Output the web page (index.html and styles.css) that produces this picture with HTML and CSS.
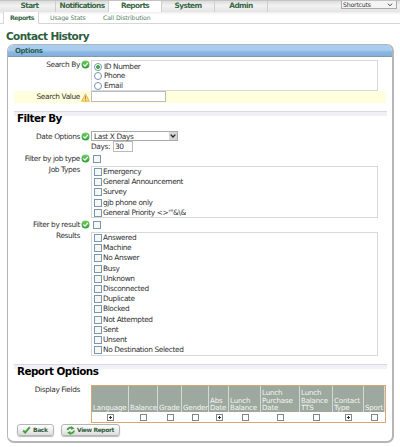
FILE: index.html
```html
<!DOCTYPE html>
<html lang="en">
<head>
<meta charset="utf-8">
<title>Contact History</title>
<link rel="stylesheet" href="styles.css">
</head>
<body>
<svg class="defs" width="0" height="0">
  <defs>
    <linearGradient id="g" x1="0" y1="0" x2="0" y2="1"><stop offset="0" stop-color="#78cf62"/><stop offset="1" stop-color="#2f9e38"/></linearGradient>
    <symbol id="ok" viewBox="0 0 9 9"><circle cx="4.5" cy="4.5" r="4" fill="url(#g)"/><path d="M2.4 4.5 4 6.1 6.8 3" fill="none" stroke="#fff" stroke-width="1.2"/></symbol>
    <symbol id="warn" viewBox="0 0 9 9"><path d="M4.5 .8 8.5 8.3H.5Z" fill="#ffd978" stroke="#e9ad45" stroke-width=".8" stroke-linejoin="round"/><path d="M4.5 3v2.9M4.5 6.6v1" stroke="#a98148" stroke-width=".9"/></symbol>
  </defs>
</svg>
<nav class="tabs">
  <a>Start</a><a>Notifications</a><a class="active">Reports</a><a>System</a><a>Admin</a>
  <div class="shortcuts"><span>Shortcuts</span><svg width="6" height="4" viewBox="0 0 6 4"><path d="M1 .7 3 2.8 5 .7" fill="none" stroke="#444" stroke-width="1"/></svg></div>
</nav>
<nav class="subtabs"><a class="active">Reports</a><a class="usage">Usage Stats</a><a class="call">Call Distribution</a></nav>
<h1>Contact History</h1>
<main class="panel">
  <header>Options</header>
  <div class="content">
    <div class="row search-by">
      <label>Search By</label><svg class="ico"><use href="#ok"/></svg>
      <div class="box radios">
        <div><i class="radio on"></i>ID Number</div><div><i class="radio"></i>Phone</div><div><i class="radio"></i>Email</div>
      </div>
    </div>
    <div class="row search-value"><label>Search Value</label><svg class="ico"><use href="#warn"/></svg><div class="input"></div></div>
    <h2 class="filter">Filter By</h2>
    <div class="row date">
      <label>Date Options</label><svg class="ico"><use href="#ok"/></svg>
      <div>
        <div class="select"><span>Last X Days</span><b><svg width="6" height="4" viewBox="0 0 6 4"><path d="M.7 .6 3 3 5.3 .6" fill="none" stroke="#222" stroke-width="1.3"/></svg></b></div>
        <div class="days">Days:<div class="input">30</div></div>
      </div>
    </div>
    <div class="row single"><label>Filter by job type</label><svg class="ico"><use href="#ok"/></svg><i class="check"></i></div>
    <div class="row jobs">
      <label>Job Types</label><span class="ico"></span>
      <div class="box checks">
        <div><i class="check"></i>Emergency</div><div><i class="check"></i>General Announcement</div><div><i class="check"></i>Survey</div><div><i class="check"></i>gjb phone only</div><div><i class="check"></i>General Priority &lt;&gt;'"&amp;\&amp;</div>
      </div>
    </div>
    <div class="row single"><label>Filter by result</label><svg class="ico"><use href="#ok"/></svg><i class="check"></i></div>
    <div class="row results">
      <label>Results</label><span class="ico"></span>
      <div class="box checks">
        <div><i class="check"></i>Answered</div><div><i class="check"></i>Machine</div><div><i class="check"></i>No Answer</div><div><i class="check"></i>Busy</div><div><i class="check"></i>Unknown</div><div><i class="check"></i>Disconnected</div><div><i class="check"></i>Duplicate</div><div><i class="check"></i>Blocked</div><div><i class="check"></i>Not Attempted</div><div><i class="check"></i>Sent</div><div><i class="check"></i>Unsent</div><div><i class="check"></i>No Destination Selected</div>
      </div>
    </div>
    <h2 class="report">Report Options</h2>
    <div class="row fields">
      <label>Display Fields</label><span class="ico"></span>
      <table>
        <colgroup><col class="c1"><col class="c2"><col class="c3"><col class="c4"><col class="c5"><col class="c6"><col class="c7"><col class="c8"><col class="c9"><col class="c10"></colgroup>
        <tr><th>Language</th><th>Balance</th><th>Grade</th><th>Gender</th><th>Abs<br>Date</th><th>Lunch<br>Balance</th><th>Lunch<br>Purchase<br>Date</th><th>Lunch<br>Balance<br>TTS</th><th>Contact<br>Type</th><th>Sport</th></tr>
        <tr><td><i class="tick on"></i></td><td><i class="tick"></i></td><td><i class="tick"></i></td><td><i class="tick"></i></td><td><i class="tick on"></i></td><td><i class="tick"></i></td><td><i class="tick"></i></td><td><i class="tick"></i></td><td><i class="tick on"></i></td><td><i class="tick"></i></td></tr>
      </table>
    </div>
    <div class="buttons">
      <button class="back"><svg width="9" height="8" viewBox="0 0 9 8"><path d="M1.2 4.5 3.2 6.6 7.8 1.2" fill="none" stroke="#44a045" stroke-width="2"/></svg>Back</button>
      <button class="view"><svg width="10" height="9" viewBox="0 0 10 9"><g fill="none" stroke="#44a045" stroke-width="1.8"><path d="M1.5 4.2A3 3 0 0 1 6 2"/><path d="M8 4.5A3 3 0 0 1 4 7.2"/></g><path d="M5.2 0 8.6 2.6 5 4ZM4.8 9 1 6.8 4.4 5Z" fill="#44a045"/></svg>View Report</button>
    </div>
  </div>
</main>
</body>
</html>
```

FILE: styles.css
```css
* { box-sizing: border-box; }
body { margin: 0; height: 447px; overflow: hidden; background: #fff; color: #333; font: 7.4px/10px "DejaVu Sans", Verdana, sans-serif; letter-spacing: -.38px; }
.defs { display: block; height: 0; }
i { display: block; flex: none; font-style: normal; }
svg { display: block; flex: none; }

.tabs { display: flex; height: 12px; border-top: 1px solid #c4c4c4; background: linear-gradient(#dcdcdc, #f2f2f2 40%, #e4e4e4); }
.tabs a { width: 53px; border-right: 1px solid #cfcfcf; color: #3a6848; font: bold 7.4px/10px "DejaVu Sans", sans-serif; letter-spacing: -.65px; text-align: center; }
.tabs a:first-child { width: 56px; padding-left: 4px; }
.tabs a.active { background: #fff; }
.shortcuts { display: flex; justify-content: space-between; align-items: center; width: 56px; height: 8px; margin-left: 73px; padding: 0 3px 0 1px; border: 1px solid #aaa; border-top: 0; background: #f4f4f4; color: #333; font-size: 6.2px; line-height: 7px; letter-spacing: -.2px; }
.subtabs { display: flex; height: 12px; border-bottom: 1px solid #d6d6d6; background: linear-gradient(#eee, #fff 3px); color: #58816a; font-size: 6.2px; line-height: 11px; letter-spacing: -.12px; }
.subtabs .active { width: 36px; height: 12px; margin-left: 3px; padding-left: 6px; border: solid #d6d6d6; border-width: 0 1px 0 1px; background: #fff; color: #35664b; font-weight: bold; letter-spacing: -.48px; }
.subtabs .usage { margin-left: 11px; width: 53px; }
h1 { margin: 5px 0 0 6px; height: 15px; color: #2e5d3c; font-size: 10.5px; line-height: 14px; letter-spacing: -.62px; }

.panel { margin-left: 7px; width: 387px; height: 399px; border: 1px solid #b5b5b5; border-right-width: 2px; border-bottom-width: 2px; border-radius: 7px; background: #fff; overflow: hidden; }
.panel header { height: 12px; padding-left: 7px; border-bottom: 1px solid #8296ac; background: linear-gradient(#a9cdee 45%, #8ab7e2 65%, #82b0dc); color: #28604f; font-weight: bold; font-size: 7px; line-height: 13px; letter-spacing: -.45px; }
.content { padding: 3px 6px 0 6px; }
.row { display: flex; }
.row label { width: 66px; text-align: right; white-space: nowrap; }
.row .ico { width: 9px; height: 9px; margin: 0 1px; }
.box { width: 287px; border: 1px solid #d9d9d9; }
.input { height: 11px; border: 1px solid #bbb; background: #fff; }

.search-by { height: 31px; }
.search-by .box { height: 31px; padding-top: 1px; }
.radios > div { display: flex; align-items: center; height: 9.6px; }
.radio { width: 8px; height: 8px; margin: 0 2px 0 2px; border: 1px solid #7795b2; border-radius: 50%; }
.radio.on { background: radial-gradient(#45ad4b 0 1.8px, #fff 2.2px); }
.search-value { width: 372px; height: 12px; background: #ffffde; }
.search-value label { line-height: 11px; }
.search-value .ico { margin-top: 2px; }
.search-value .input { width: 75px; }
h2 { margin: 0; width: 373px; border-top: 1px solid #d9d9e5; background: linear-gradient(#f0f0f6 4px, #fff 4px); color: #000; padding-left: 3px; font-size: 10.4px; line-height: 12px; letter-spacing: -.54px; }
.filter { margin-top: 8px; height: 20px; }
.date { height: 21px; }
.date > label { line-height: 11px; }
.date > .ico { margin-top: 1px; }
.select { display: flex; justify-content: space-between; width: 87px; height: 10px; border: 1px solid #aaa; padding-left: 2px; line-height: 9px; }
.select b { display: flex; align-items: center; justify-content: center; width: 8px; background: #d5d5d5; }
.days { display: flex; line-height: 11px; }
.days .input { width: 20px; margin-left: 3px; padding-left: 1px; line-height: 9px; }
.single { height: 13px; align-items: center; }
.single .check { margin-left: 2px; }
.check { width: 8px; height: 8px; border: 1px solid #7897b2; background: #f7f7f3; }
.jobs { height: 52px; margin-top: 1px; }
.jobs label, .results label { margin-top: -1px; }
.jobs .box { height: 52px; }
.checks > div { display: flex; align-items: center; height: 10.2px; white-space: pre; }
.checks .check { margin: 0 1px 0 2px; }
.results { height: 124px; margin-top: 1px; }
.report { height: 20px; margin-top: 8px; }
.fields { height: 39px; margin-top: 1px; }
table { width: 295px; height: 38px; table-layout: fixed; border: 1px solid #d9a873; border-spacing: 0; }
th, td { padding: 0; }
th { height: 26px; padding-left: 1px; border-right: 1px solid #d5d9d3; background: #9da89e; color: #f4f6f3; font-size: 7.1px; font-weight: normal; line-height: 7.6px; letter-spacing: -.2px; text-align: left; vertical-align: bottom; white-space: nowrap; }
td { height: 10px; }
.c1 { width: 37px; } .c2 { width: 29px; } .c3 { width: 24px; } .c4 { width: 27px; } .c5 { width: 20px; } .c6 { width: 32px; } .c7 { width: 39px; } .c8 { width: 33px; } .c9 { width: 31px; } .c10 { width: 21px; }
.tick { width: 7px; height: 7px; margin: 1px auto; border: 1px solid #858585; background: #fff; }
.tick.on { background: linear-gradient(#333, #333) center / 3px 1px no-repeat, linear-gradient(#333, #333) center / 1px 3px no-repeat; }
.buttons { display: flex; gap: 7px; padding-left: 3px; }
button { display: flex; align-items: center; height: 12px; padding: 0; border: 1px solid #b5b5b5; border-radius: 3px; background: linear-gradient(#fff, #ddd); box-shadow: 0 1px 1px #bbb; color: #33603f; font: bold 6px/10px "DejaVu Sans", sans-serif; letter-spacing: -.38px; white-space: nowrap; }
.back { width: 37px; padding-left: 4px; gap: 2px; }
.view { width: 59px; padding-left: 4px; gap: 1px; }
```
